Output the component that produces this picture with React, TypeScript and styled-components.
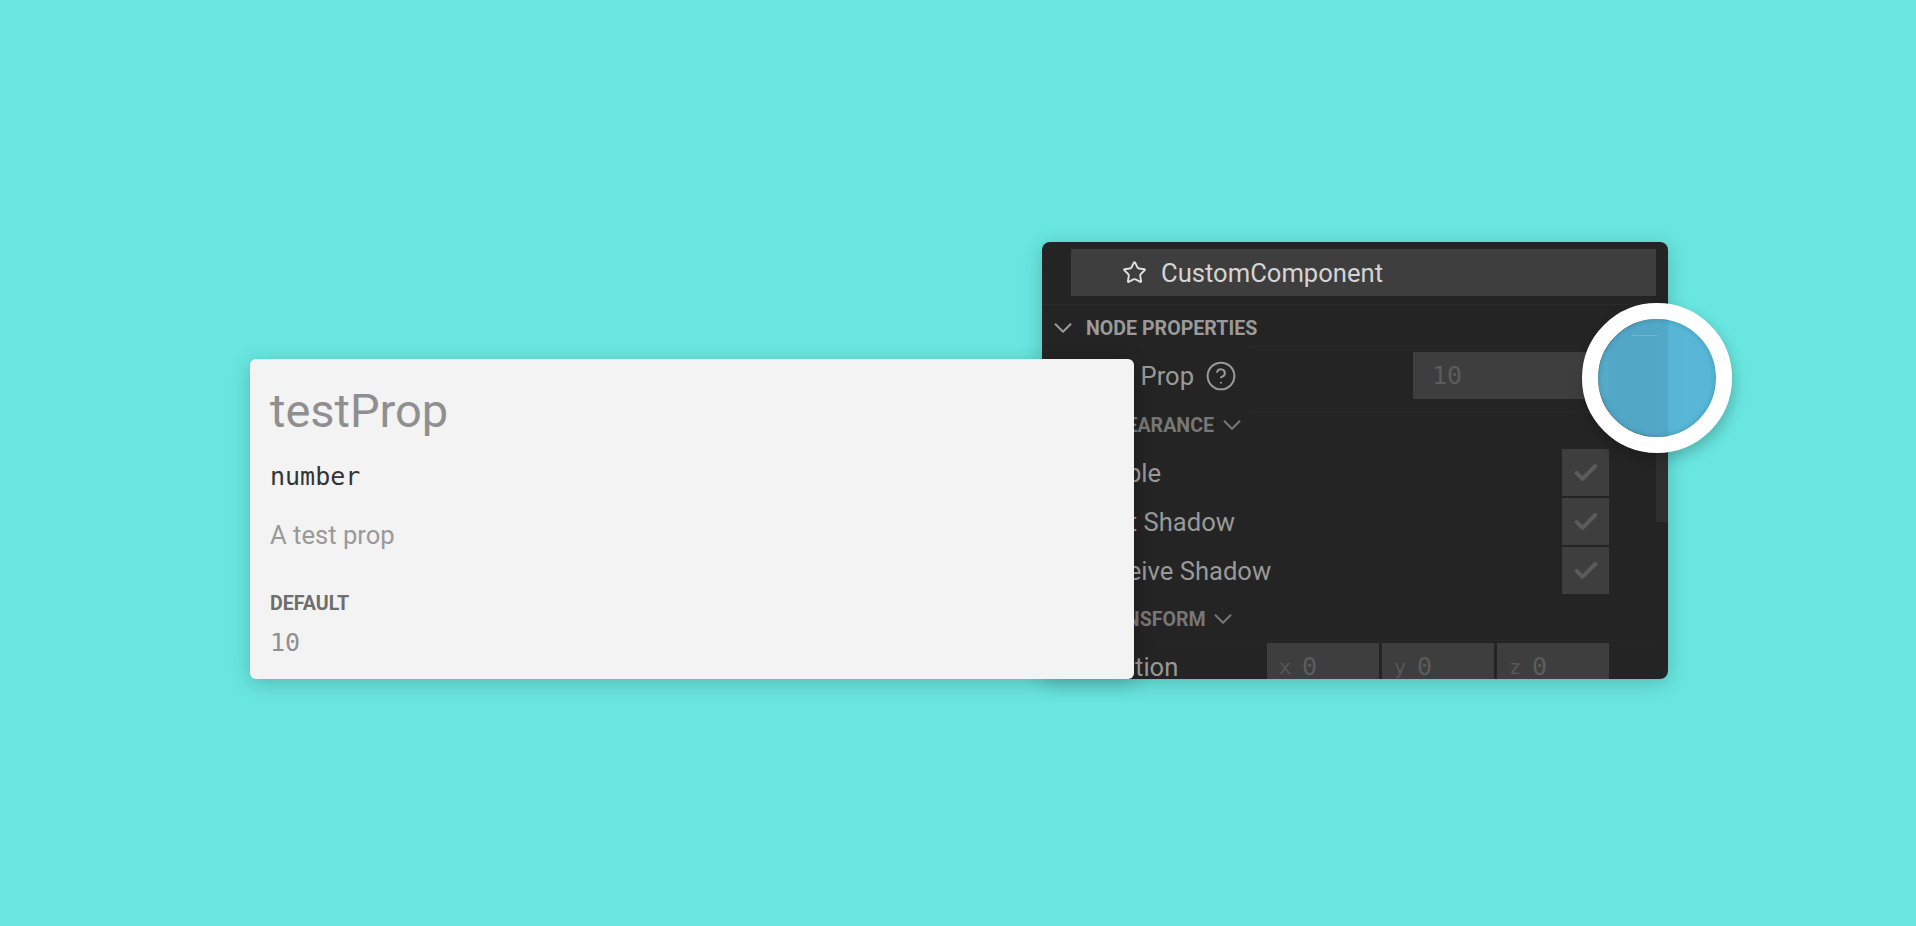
import React from "react";
import styled, { createGlobalStyle } from "styled-components";
import { Star, ChevronDown, CircleHelp, Check } from "lucide-react";

const Global = createGlobalStyle`
    html, body {
        margin: 0;
        padding: 0;
        background: #69e6e0;
    }
`;

const Stage = styled.div`
    width: 1916px;
    height: 926px;
    box-sizing: border-box;
    padding: 242px 0 0 250px;
    background: #69e6e0;
    font-family: Roboto, sans-serif;
    overflow: hidden;
`;

const Scene = styled.div`
    display: flex;
    align-items: flex-end;
    height: 437px;
`;

const Card = styled.section`
    position: relative;
    z-index: 1;
    width: 884px;
    height: 320px;
    margin-right: -92px;
    box-sizing: border-box;
    padding: 26px 20px 0;
    background: #f3f3f3;
    border-radius: 6px;
    box-shadow: 0 4px 20px rgba(0, 0, 0, 0.2);
`;

const PropName = styled.h1`
    margin: 0;
    font-size: 47px;
    line-height: 52px;
    font-weight: 400;
    color: #8f8f8f;
`;

const Mono = styled.div<{ $color: string; $top: number }>`
    margin-top: ${(p) => p.$top}px;
    font-family: "DejaVu Sans Mono", monospace;
    font-size: 25px;
    line-height: 32px;
    color: ${(p) => p.$color};
`;

const PropText = styled.p`
    margin: 26px 0 0;
    font-size: 25.6px;
    line-height: 32px;
    color: #999;
`;

const DefaultLabel = styled.div`
    margin-top: 41px;
    font-size: 19.6px;
    line-height: 24px;
    font-weight: 700;
    color: #6e6e6e;
`;

const PanelWrap = styled.div`
    position: relative;
    width: 626px;
    height: 437px;
`;

const Panel = styled.aside`
    position: relative;
    height: 100%;
    display: flex;
    flex-direction: column;
    overflow: hidden;
    background: #242424;
    border-radius: 8px;
`;

const PanelShadow = styled.div`
    position: absolute;
    inset: 0;
    border-radius: 8px;
    box-shadow: 0 4px 20px rgba(0, 0, 0, 0.2);
`;

const Scroll = styled.div`
    position: absolute;
    right: 0;
    top: 70px;
    width: 12px;
    height: 210px;
    background: #2f2f2f;
`;

const HeaderWrap = styled.div`
    padding: 7px 12px 8px 29px;
    border-bottom: 1px dotted #303030;
`;

const NodeHeader = styled.div`
    height: 47px;
    display: flex;
    align-items: center;
    gap: 14px;
    padding-left: 51px;
    background: #3e3e3e;
    color: #d4d4d4;
    font-size: 25.6px;
`;

const Title = styled.div<{ $left: number; $color: string; $top: number; $bottom: number }>`
    height: 24px;
    margin: ${(p) => p.$top}px 0 ${(p) => p.$bottom}px;
    padding-left: ${(p) => p.$left}px;
    display: flex;
    align-items: center;
    gap: 10px;
    font-size: 19.6px;
    font-weight: 700;
    color: ${(p) => p.$color};
    svg {
        margin: 0 -7.5px;
    }
`;

const NodeTitle = styled(Title)`
    gap: 16px;
`;

const Dots = styled.div<{ $top: number; $left: number }>`
    margin: ${(p) => p.$top}px 12px 0 ${(p) => p.$left}px;
    border-top: 1px dotted #2c2c2c;
`;

const Row = styled.div<{ $top?: number }>`
    height: 47px;
    margin-top: ${(p) => p.$top ?? 0}px;
    padding: 0 59px 0 43px;
    display: flex;
    align-items: center;
    justify-content: space-between;
    font-size: 25.6px;
    color: #999;
`;

const Label = styled.span`
    display: flex;
    align-items: center;
    gap: 11px;
`;

const Field = styled.div`
    width: 196px;
    height: 47px;
    box-sizing: border-box;
    padding-left: 19px;
    display: flex;
    align-items: center;
    background: #3e3e3e;
    font-family: "DejaVu Sans Mono", monospace;
    font-size: 25px;
    color: #5c5c5c;
`;

const CheckList = styled.div`
    display: flex;
    flex-direction: column;
    gap: 2px;
`;

const CheckBox = styled.div`
    width: 47px;
    height: 47px;
    display: flex;
    align-items: center;
    justify-content: center;
    background: #3e3e3e;
    color: #5b5b5b;
`;

const Vector = styled.div`
    width: 342px;
    display: grid;
    grid-template-columns: repeat(3, 1fr);
    gap: 3px;
`;

const VectorField = styled.div`
    height: 47px;
    box-sizing: border-box;
    padding-left: 12px;
    display: flex;
    align-items: center;
    gap: 11px;
    background: #3e3e3e;
    font-family: "DejaVu Sans Mono", monospace;
    font-size: 25px;
    color: #5c5c5c;
    small {
        font-size: 20px;
        color: #585858;
    }
`;

const Marker = styled.div`
    position: absolute;
    left: 540px;
    top: 61px;
    width: 150px;
    height: 150px;
    box-sizing: border-box;
    border: 16px solid #fff;
    border-radius: 50%;
    background: rgba(87, 178, 213, 0.92);
    background-clip: padding-box;
    box-shadow: 2px 6px 14px rgba(0, 0, 0, 0.22), inset 0 0 5px rgba(0, 60, 90, 0.28);
    &::after {
        content: "";
        position: absolute;
        left: 34px;
        top: 16px;
        width: 25px;
        height: 1px;
        background: rgba(255, 255, 255, 0.2);
    }
`;

const rows = ["Visible", "Cast Shadow", "Receive Shadow"];
const axes = ["x", "y", "z"];

const App = () => {
    return (
        <Stage>
            <Global />
            <Scene>
                <Card>
                    <PropName>testProp</PropName>
                    <Mono $color="#333" $top={24}>number</Mono>
                    <PropText>A test prop</PropText>
                    <DefaultLabel>DEFAULT</DefaultLabel>
                    <Mono $color="#8f8f8f" $top={11}>10</Mono>
                </Card>
                <PanelWrap>
                    <PanelShadow />
                    <Panel>
                        <Scroll />
                        <HeaderWrap>
                            <NodeHeader>
                                <Star size={25} strokeWidth={1.8} color="#e0e0e0" />
                                CustomComponent
                            </NodeHeader>
                        </HeaderWrap>
                        <NodeTitle $left={13} $color="#9a9a9a" $top={11} $bottom={6}>
                            <ChevronDown size={30} strokeWidth={2} absoluteStrokeWidth />
                            NODE PROPERTIES
                        </NodeTitle>
                        <Dots $top={0} $left={206} />
                        <Row $top={5}>
                            <Label>
                                Test Prop
                                <CircleHelp size={32} strokeWidth={2} absoluteStrokeWidth />
                            </Label>
                            <Field>10</Field>
                        </Row>
                        <Dots $top={13} $left={206} />
                        <Title $left={46} $color="#777" $top={0} $bottom={12}>
                            APPEARANCE
                            <ChevronDown size={30} strokeWidth={2} absoluteStrokeWidth />
                        </Title>
                        <CheckList>
                            {rows.map((name) => (
                                <Row key={name}>
                                    <span>{name}</span>
                                    <CheckBox>
                                        <Check size={28} strokeWidth={4} absoluteStrokeWidth />
                                    </CheckBox>
                                </Row>
                            ))}
                        </CheckList>
                        <Title $left={46} $color="#777" $top={13} $bottom={0}>
                            TRANSFORM
                            <ChevronDown size={30} strokeWidth={2} absoluteStrokeWidth />
                        </Title>
                        <Dots $top={9} $left={113} />
                        <Row $top={2}>
                            <span>Position</span>
                            <Vector>
                                {axes.map((axis) => (
                                    <VectorField key={axis}>
                                        <small>{axis}</small>0
                                    </VectorField>
                                ))}
                            </Vector>
                        </Row>
                    </Panel>
                    <Marker />
                </PanelWrap>
            </Scene>
        </Stage>
    );
};

export default App;
